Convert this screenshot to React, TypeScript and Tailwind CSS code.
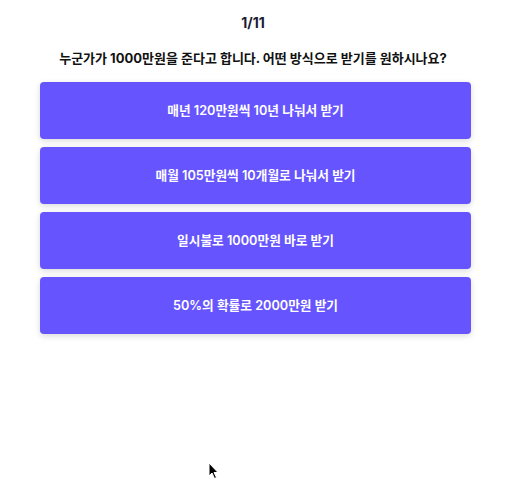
import React from "react";

const options = [
  "매년 120만원씩 10년 나눠서 받기",
  "매월 105만원씩 10개월로 나눠서 받기",
  "일시불로 1000만원 바로 받기",
  "50%의 확률로 2000만원 받기",
];

export default function App() {
  return (
    <div
      className="relative w-[506px] h-[500px] bg-white"
      style={{ fontFamily: "Inter, 'Noto Sans CJK KR', sans-serif" }}
    >
      <div className="flex flex-col items-center pt-[14px]">
        <div className="text-[14px] leading-[17px] font-bold text-[#1c1b33]">1/11</div>
        <div className="mt-[19px] text-[13px] leading-[17px] font-bold text-[#111111]">
          누군가가 1000만원을 준다고 합니다. 어떤 방식으로 받기를 원하시나요?
        </div>
      </div>
      <div className="ml-[40px] w-[431px] mt-[15px] flex flex-col gap-[8px]">
        {options.map((o) => (
          <button
            key={o}
            className="h-[57px] w-full rounded-[4px] bg-[#6655ff] text-white text-[12.7px] font-semibold shadow-[0_2px_6px_rgba(0,0,0,0.15)] flex items-center justify-center"
          >
            {o}
          </button>
        ))}
      </div>
      <svg
        className="absolute left-[208px] top-[462px]"
        width="12"
        height="18"
        viewBox="0 0 12 18"
      >
        <path d="M1 1 L1 14 L4 11 L6.5 16.5 L8.5 15.5 L6 10.5 L10 10.5 Z" fill="#000" stroke="#fff" strokeWidth="1" />
      </svg>
    </div>
  );
}
